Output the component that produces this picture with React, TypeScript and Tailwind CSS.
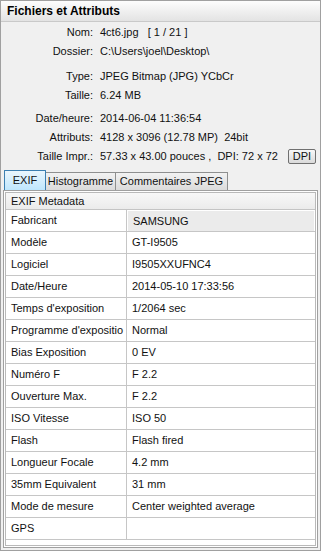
import React from "react";

const info1 = [
  ["Nom:", "4ct6.jpg   [ 1 / 21 ]"],
  ["Dossier:", "C:\\Users\\joel\\Desktop\\"],
];
const info2 = [
  ["Type:", "JPEG Bitmap (JPG) YCbCr"],
  ["Taille:", "6.24 MB"],
];
const info3 = [
  ["Date/heure:", "2014-06-04 11:36:54"],
  ["Attributs:", "4128 x 3096 (12.78 MP)  24bit"],
];

const rows = [
  ["Fabricant", "SAMSUNG"],
  ["Modèle", "GT-I9505"],
  ["Logiciel", "I9505XXUFNC4"],
  ["Date/Heure", "2014-05-10 17:33:56"],
  ["Temps d'exposition", "1/2064 sec"],
  ["Programme d'expositio", "Normal"],
  ["Bias Exposition", "0 EV"],
  ["Numéro F", "F 2.2"],
  ["Ouverture Max.", "F 2.2"],
  ["ISO Vitesse", "ISO 50"],
  ["Flash", "Flash fired"],
  ["Longueur Focale", "4.2 mm"],
  ["35mm Equivalent", "31 mm"],
  ["Mode de mesure", "Center weighted average"],
  ["GPS", ""],
];

function InfoRow({ label, value }: { label: string; value: string }) {
  return (
    <div className="flex h-[19px] items-center">
      <div className="w-[92px] text-right whitespace-nowrap">{label}</div>
      <div className="pl-[7px] whitespace-pre">{value}</div>
    </div>
  );
}

export default function App() {
  return (
    <div className="w-[321px] h-[551px] border border-[#a0a0a0] bg-[#f0f0f0] flex flex-col font-['Liberation_Sans',Arial,sans-serif] text-[11px] text-[#111111] overflow-hidden">
      <div className="h-[21px] shrink-0 border-b border-[#c9c9c9] bg-linear-to-b from-[#fdfdfd] to-[#e3e3e3] px-[6px] flex items-center font-bold text-[12px] text-black">
        Fichiers et Attributs
      </div>
      <div className="pt-[1px] shrink-0">
        {info1.map(([l, v]) => (
          <InfoRow key={l} label={l} value={v} />
        ))}
        <div className="h-[6px]" />
        {info2.map(([l, v]) => (
          <InfoRow key={l} label={l} value={v} />
        ))}
        <div className="h-[4px]" />
        {info3.map(([l, v]) => (
          <InfoRow key={l} label={l} value={v} />
        ))}
        <div className="flex h-[19px] items-center">
          <div className="w-[92px] text-right whitespace-nowrap">Taille Impr.:</div>
          <div className="pl-[7px] whitespace-pre">57.33 x 43.00 pouces ,  DPI: 72 x 72</div>
          <button className="ml-auto mr-[4px] h-[15px] w-[28px] border border-[#707070] rounded-[2px] bg-linear-to-b from-[#f8f8f8] to-[#dadada] text-[11px] leading-none flex items-center justify-center">
            DPI
          </button>
        </div>
      </div>
      <div className="mt-[4px] h-[20px] px-[3px] flex items-end shrink-0">
        <div className="h-[20px] w-[42px] border border-b-0 border-[#3c7fb1] bg-linear-to-b from-[#eaf6fd] to-[#bee6fd] flex items-center justify-center rounded-t-[1px]">
          EXIF
        </div>
        <div className="h-[18px] w-[70px] border border-l-0 border-b-0 border-[#8e8f8f] bg-linear-to-b from-[#f2f2f2] to-[#dbdbdb] flex items-center justify-center">
          Histogramme
        </div>
        <div className="h-[18px] w-[112px] border border-l-0 border-b-0 border-[#8e8f8f] bg-linear-to-b from-[#f2f2f2] to-[#dbdbdb] flex items-center justify-center">
          Commentaires JPEG
        </div>
      </div>
      <div className="flex-1 mx-[2px] mb-[2px] border border-[#a0a0a0] bg-white p-[1px] flex flex-col min-h-0">
        <div className="flex-1 border border-[#b9b9b9] flex flex-col">
          <div className="h-[17px] shrink-0 border-b border-[#c4c4c4] bg-linear-to-b from-[#f8f8f8] to-[#ebebeb] flex items-center pl-[5px]">
            EXIF Metadata
          </div>
          {rows.map(([l, v], i) => (
            <div key={l} className="grid grid-cols-[121px_1fr] h-[22px] shrink-0 border-b border-[#c6c6c6]">
              <div className="border-r border-[#c6c6c6] pl-[5px] flex items-center whitespace-nowrap overflow-hidden">
                {l}
              </div>
              <div className={`pl-[5px] flex items-center whitespace-nowrap ${i === 0 ? "bg-[#ebebeb] mt-[1px] ml-[1px] mr-[1px]" : ""}`}>
                {v}
              </div>
            </div>
          ))}
          <div className="flex-1" />
        </div>
      </div>
    </div>
  );
}
